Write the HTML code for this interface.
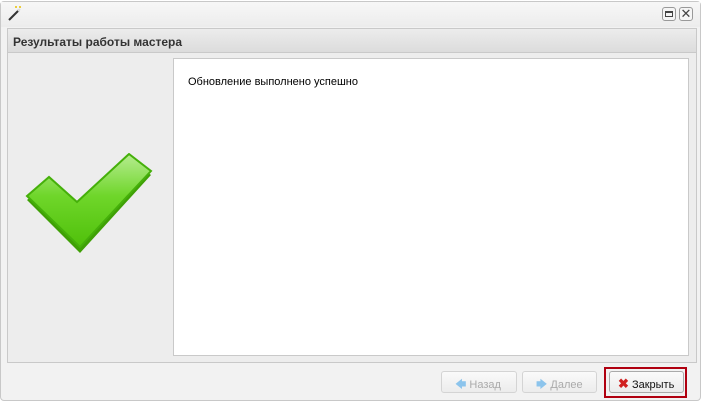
<!DOCTYPE html>
<html><head><meta charset="utf-8"><style>
*{margin:0;padding:0;box-sizing:border-box}
body{width:701px;height:401px;overflow:hidden;background:#fff;font-family:"Liberation Sans",sans-serif;position:relative}
.win{position:absolute;left:0;top:1px;width:701px;height:400px;background:#f2f2f2;border:1px solid #c8c8c8;border-radius:4px}
.tb{position:absolute;left:0;top:0;width:699px;height:25px;background:linear-gradient(#f7f7f7,#ececec)}
.frame{position:absolute;left:6px;top:26px;width:690px;height:335px;border:1px solid #c9c9c9;background:#ededed}
.hdr{position:absolute;left:0;top:0;width:688px;height:24px;background:linear-gradient(#ececec,#dcdcdc);border-bottom:1px solid #c9c9c9;font-weight:bold;font-size:12px;color:#333;padding:6px 0 0 5px}
.content{position:absolute;left:165px;top:29px;width:516px;height:298px;background:#fff;border:1px solid #c9c9c9;font-size:11px;color:#000;padding:17px 0 0 14px}
.btn{position:absolute;top:369px;height:22px;border:1px solid #d4d4d4;border-radius:3px;background:linear-gradient(#fafafa,#ececec);font-size:11px;color:#aaa;padding:4px 0 0 0}
.tbtn{position:absolute;top:5px;width:14px;height:14px;border:1px solid #999;border-radius:3px;background:#f5f5f5}
</style></head><body>
<div class="win">
 <div class="tb">
  <svg style="position:absolute;left:6px;top:3px" width="16" height="16" viewBox="0 0 16 16"><line x1="2" y1="15" x2="12" y2="5" stroke="#333" stroke-width="2"/><line x1="11" y1="6" x2="13" y2="4" stroke="#ddd" stroke-width="2"/><circle cx="13" cy="2" r="1" fill="#e8c000"/><circle cx="9" cy="2" r="1" fill="#e8c000"/></svg>
  <div class="tbtn" style="left:661px"><div style="position:absolute;left:2px;top:3px;width:8px;height:6px;border:1px solid #444;border-top-width:2px"></div></div>
  <div class="tbtn" style="left:678px;font-size:13px;line-height:11px;text-align:center;color:#444">✕</div>
 </div>
 <div class="frame">
  <div class="hdr">Результаты работы мастера</div>
  <svg style="position:absolute;left:15px;top:124px" width="130" height="100" viewBox="15 150 130 100">
   <defs><linearGradient id="g" x1="0" y1="0" x2="0" y2="1"><stop offset="0" stop-color="#b6ec90"/><stop offset="0.45" stop-color="#6fd62a"/><stop offset="1" stop-color="#4fc00a"/></linearGradient></defs>
   <polygon points="19,197 41,178 69,203 121,155 143,172 72,250" fill="#3fa006"/>
   <polygon points="19,193 41,174 69,199 121,151 143,168 72,244" fill="url(#g)" stroke="#45b00a" stroke-width="2"/>
  </svg>
  <div class="content">Обновление выполнено успешно</div>
 </div>
 <div class="btn" style="left:440px;width:76px;padding-left:13px"><span style="color:#8cc4ec">&#x1F844;</span> Назад</div>
 <div class="btn" style="left:521px;width:75px;padding-left:13px"><span style="color:#8cc4ec">&#x1F846;</span> Далее</div>
 <div style="position:absolute;left:603px;top:365px;width:83px;height:31px;border:2px solid #b00010"></div>
 <div class="btn" style="left:608px;width:75px;color:#111;padding-left:8px;border-color:#aaa"><span style="color:#d02020;font-weight:bold;font-size:13px">✖</span> Закрыть</div>
</div>
</body></html>
